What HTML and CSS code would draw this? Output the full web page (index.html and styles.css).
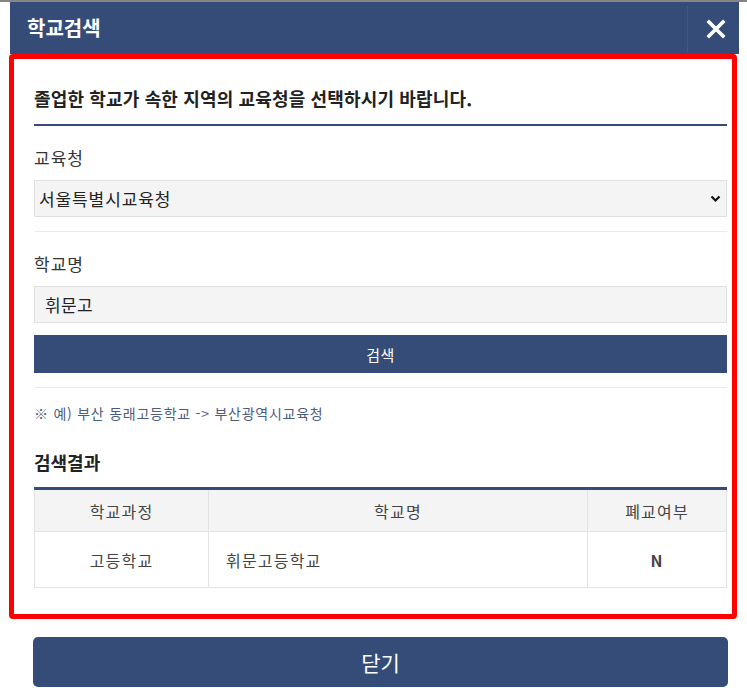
FILE: index.html
```html
<!DOCTYPE html>
<html lang="ko">
<head>
    <meta charset="utf8"/>
    <title>학교검색</title>
    <meta name="viewport" content="width=device-width, initial-scale=1.0"/>
    <link rel="stylesheet" href="styles.css">
</head>

<body>
<div class="topline"></div>

<div class="popup">
    <div class="popup-head">
        <h1>학교검색</h1>
        <button class="btn-x" type="button">
            <svg width="20" height="20" viewBox="0 0 20 20">
                <path d="M3 3 L17 17 M17 3 L3 17" stroke="#fff" stroke-width="3.6" stroke-linecap="square" fill="none"/>
            </svg>
        </button>
    </div>

    <div class="popup-body">
        <p class="guide">졸업한 학교가 속한 지역의 교육청을 선택하시기 바랍니다.</p>

        <div class="field">
            <label for="office">교육청</label>
            <div class="select-wrap">
                <select id="office">
                    <option>서울특별시교육청</option>
                    <option>부산광역시교육청</option>
                </select>
                <svg class="chevron" width="11" height="8" viewBox="0 0 11 8">
                    <path d="M1.5 1.5 L5.5 5.5 L9.5 1.5" stroke="#111" stroke-width="2.2" fill="none"/>
                </svg>
            </div>
        </div>

        <div class="field">
            <label for="school">학교명</label>
            <input id="school" type="text" value="휘문고">
            <button class="btn-search" type="button">검색</button>
        </div>

        <p class="note">※ 예) 부산 동래고등학교 -&gt; 부산광역시교육청</p>

        <h2>검색결과</h2>
        <table class="result">
            <thead>
            <tr>
                <th class="c1">학교과정</th>
                <th class="c2">학교명</th>
                <th class="c3">폐교여부</th>
            </tr>
            </thead>
            <tbody>
            <tr>
                <td class="c1">고등학교</td>
                <td class="c2 left">휘문고등학교</td>
                <td class="c3 yn">N</td>
            </tr>
            </tbody>
        </table>
    </div>

    <div class="popup-foot">
        <button class="btn-close" type="button">닫기</button>
    </div>
</div>
</body>
</html>
```

FILE: styles.css
```css
body {
    margin: 0;
    background: #fff;
    font-family: "Noto Sans CJK KR", "Noto Sans", sans-serif;
    color: #333;
}

.topline {
    height: 2px;
    background: #858585;
}

.popup {
    width: 729px;
    margin-left: 10px;
}

.popup-head {
    display: flex;
    align-items: center;
    height: 52px;
    background: #344c77;
}

.popup-head h1 {
    flex: 1;
    margin: 0;
    padding-left: 17px;
    font-size: 20px;
    font-weight: bold;
    color: #fff;
    line-height: 24px;
}

.btn-x {
    display: flex;
    align-items: center;
    justify-content: center;
    width: 52px;
    height: 46px;
    margin-top: 2px;
    padding: 0 0 0 4px;
    border: none;
    border-left: 1px solid #3f5781;
    background: transparent;
    cursor: pointer;
}

/* red outline box */
.popup-body {
    width: 728px;
    box-sizing: border-box;
    margin-left: -1px;
    padding: 27px 5px 26px 20px;
    border: 5px solid #ff0000;
    border-radius: 4px;
    background: #fff;
}

.guide {
    margin: 0;
    padding-bottom: 14px;
    border-bottom: 2px solid #344c77;
    font-size: 18px;
    font-weight: bold;
    line-height: 24px;
    color: #222;
    letter-spacing: 0.15px;
}

.field {
    padding: 21px 0 14px;
    border-bottom: 1px solid #eaeaea;
}

.field label {
    display: block;
    margin-bottom: 11px;
    font-size: 17px;
    line-height: 22px;
    color: #333;
    letter-spacing: 1px;
}

.select-wrap {
    position: relative;
}

.field select,
.field input {
    display: block;
    width: 100%;
    height: 37px;
    box-sizing: border-box;
    margin: 0;
    border: 1px solid #e0e0e0;
    background: #f4f4f4;
    font-family: inherit;
    font-size: 17px;
    color: #222;
    outline: none;
}

.field select {
    appearance: none;
    -webkit-appearance: none;
    padding: 0 30px 0 4px;
    border-radius: 0;
    letter-spacing: 0.9px;
}

.field input {
    padding: 0 10px;
    letter-spacing: 0.3px;
}

.chevron {
    position: absolute;
    right: 6px;
    top: 15px;
}

.btn-search {
    display: block;
    width: 100%;
    height: 38px;
    margin-top: 12px;
    border: none;
    background: #344c77;
    color: #fff;
    font-family: inherit;
    font-size: 15px;
    letter-spacing: 0.5px;
    cursor: pointer;
}

.note {
    margin: 15px 0 0;
    font-size: 14px;
    line-height: 20px;
    color: #4b5c80;
    letter-spacing: 0.75px;
}

h2 {
    margin: 26px 0 12px;
    font-size: 18px;
    font-weight: bold;
    line-height: 26px;
    color: #222;
}

.result {
    width: 100%;
    border-collapse: collapse;
    border-top: 3px solid #344c77;
    font-size: 16px;
    letter-spacing: 1.2px;
    color: #444;
}

.result th,
.result td {
    padding: 0;
    border: 1px solid #e2e2e2;
    text-align: center;
    font-weight: normal;
}

.result th {
    height: 41px;
    background: #f4f4f4;
}

.result td {
    height: 55px;
}

.result .c1 {
    width: 173px;
}

.result .c3 {
    width: 138px;
}

.result td.left {
    text-align: left;
    padding-left: 17px;
}

.result td.yn {
    font-weight: bold;
    color: #444;
}

.popup-foot {
    padding: 18px 0 0 23px;
}

.btn-close {
    display: block;
    width: 695px;
    height: 50px;
    border: none;
    border-radius: 5px;
    background: #344c77;
    color: #fff;
    font-family: inherit;
    font-size: 21px;
    cursor: pointer;
}
```
